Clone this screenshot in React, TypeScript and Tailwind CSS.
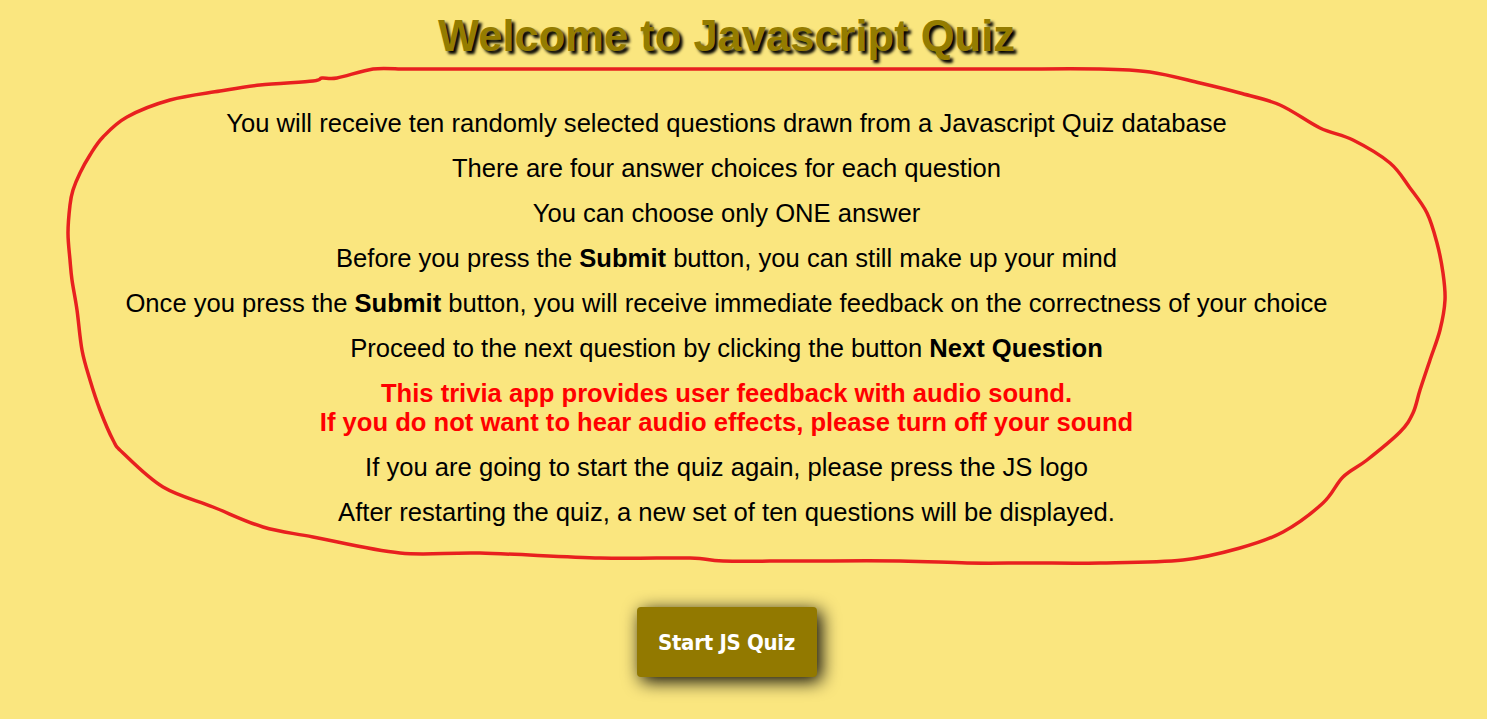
import React from "react"

const loop = [
  [400, 69], [550, 69], [700, 69], [850, 69], [1000, 69], [1100, 69], [1150, 72], [1200, 83], [1240, 93],
  [1280, 105], [1320, 128], [1353, 140], [1390, 163], [1410, 188], [1427, 213], [1437, 243], [1443, 273],
  [1445, 300], [1440, 330], [1430, 360], [1420, 390], [1413, 413], [1400, 432], [1367, 460], [1343, 477],
  [1323, 503], [1283, 532], [1240, 548], [1183, 560], [1100, 563], [1030, 563], [967, 563], [900, 561],
  [800, 561], [723, 561], [690, 558], [600, 558], [480, 553], [400, 553], [313, 537], [263, 527],
  [213, 507], [163, 487], [123, 453], [113, 440], [100, 410], [90, 380], [82, 350], [77, 310],
  [72, 280], [70, 260], [68, 233], [70, 205], [73, 190], [80, 173], [90, 155], [103, 137], [127, 117],
  [170, 100], [220, 91], [260, 85], [313, 81], [322, 78], [337, 78], [373, 69], [400, 69],
]

// catmull-rom -> cubic bezier so the hand-drawn loop stays smooth
function smoothPath(pts: number[][]) {
  let d = `M ${pts[0][0]} ${pts[0][1]}`
  for (let i = 0; i < pts.length - 1; i++) {
    const p0 = pts[i - 1] || pts[i]
    const p1 = pts[i]
    const p2 = pts[i + 1]
    const p3 = pts[i + 2] || p2
    const c1x = p1[0] + (p2[0] - p0[0]) / 6
    const c1y = p1[1] + (p2[1] - p0[1]) / 6
    const c2x = p2[0] - (p3[0] - p1[0]) / 6
    const c2y = p2[1] - (p3[1] - p1[1]) / 6
    d += ` C ${c1x} ${c1y} ${c2x} ${c2y} ${p2[0]} ${p2[1]}`
  }
  return d
}

export default function App() {
  const rules = [
    <>You will receive ten randomly selected questions drawn from a Javascript Quiz database</>,
    <>There are four answer choices for each question</>,
    <>You can choose only ONE answer</>,
    <>Before you press the <b>Submit</b> button, you can still make up your mind</>,
    <>Once you press the <b>Submit</b> button, you will receive immediate feedback on the correctness of your choice</>,
    <>Proceed to the next question by clicking the button <b>Next Question</b></>,
  ]

  return (
    <div className="relative min-h-screen w-full bg-[#fae67f] font-['Liberation_Sans',Arial,sans-serif] overflow-hidden">
      <div className="flex flex-col items-center pr-[34px] pt-[11px]">
        {/* Title */}
        <h1 className="text-[43.5px] leading-[50px] font-bold text-[#947c00] [text-shadow:3px_3px_3px_#000]">
          Welcome to Javascript Quiz
        </h1>

        {/* Instructions */}
        <div className="mt-[48px] flex flex-col items-center gap-4 text-center text-[25.6px] leading-[29px] text-black">
          {rules.map((r, i) => (
            <p key={i}>{r}</p>
          ))}
          <p className="font-bold text-[#ff0000]">
            This trivia app provides user feedback with audio sound.
            <br />
            If you do not want to hear audio effects, please turn off your sound
          </p>
          <p>If you are going to start the quiz again, please press the JS logo</p>
          <p>After restarting the quiz, a new set of ten questions will be displayed.</p>
        </div>

        <button className="mt-[80px] h-[70px] w-[180px] rounded-[4px] bg-[#927900] text-[22px] font-bold text-white font-['DejaVu_Sans_Condensed','DejaVu_Sans',sans-serif] tracking-[-0.3px] shadow-[4px_4px_18px_#000]">
          Start JS Quiz
        </button>
      </div>

      {/* red hand-drawn annotation */}
      <svg className="pointer-events-none absolute left-0 top-0" width="1487" height="719">
        <path d={smoothPath(loop)} fill="none" stroke="#e8201f" strokeWidth="3.5" strokeLinejoin="round" strokeLinecap="round" />
      </svg>
    </div>
  )
}
